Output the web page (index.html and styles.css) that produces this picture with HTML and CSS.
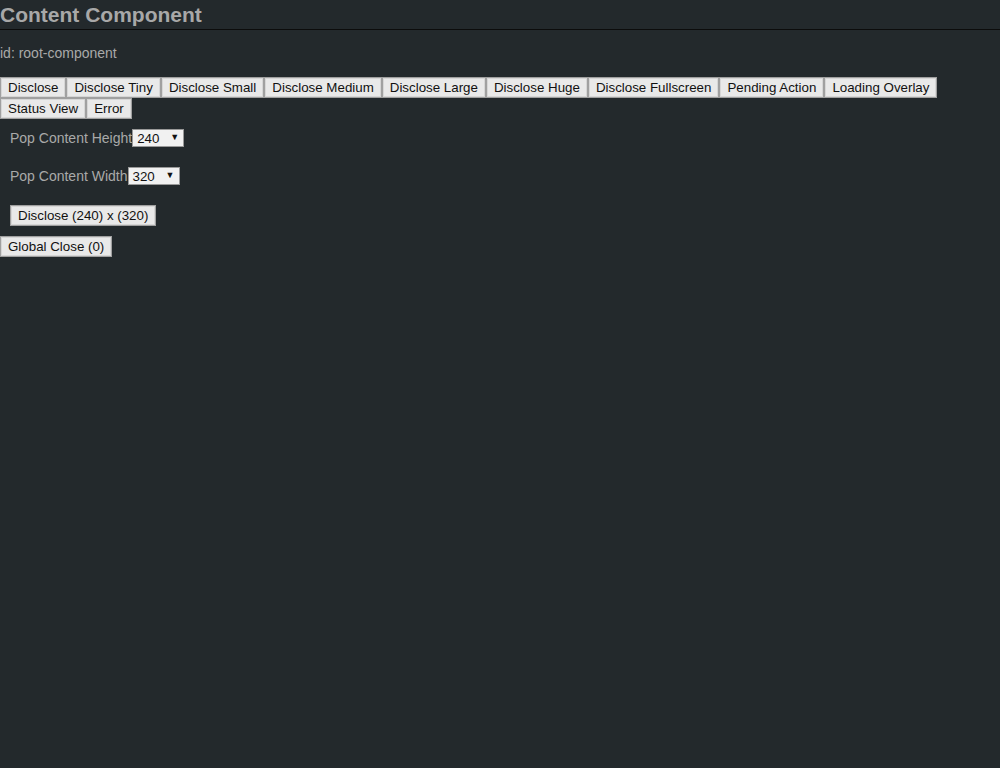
FILE: index.html
```html
<!DOCTYPE html>
<html>
<head>
<meta charset="utf-8">
<link rel="stylesheet" href="styles.css">
</head>
<body>
<h1 class="title">Content Component</h1>
<div class="id-line">id: root-component</div>
<div class="btn-row"><button class="btn">Disclose</button><button class="btn">Disclose Tiny</button><button class="btn">Disclose Small</button><button class="btn">Disclose Medium</button><button class="btn">Disclose Large</button><button class="btn">Disclose Huge</button><button class="btn">Disclose Fullscreen</button><button class="btn">Pending Action</button><button class="btn">Loading Overlay</button><button class="btn">Status View</button><button class="btn">Error</button></div>
<div class="pop">
  <div class="field"><span class="label">Pop Content Height</span><span class="sel"><span class="sel-val">240</span><span class="arrow">▼</span></span></div>
  <div class="field"><span class="label">Pop Content Width</span><span class="sel"><span class="sel-val">320</span><span class="arrow">▼</span></span></div>
  <div class="field"><button class="btn">Disclose (240) x (320)</button></div>
</div>
<div class="global"><button class="btn">Global Close (0)</button></div>
</body>
</html>
```
FILE: styles.css
```css
html, body {
  margin: 0;
  padding: 0;
  background: #23292c;
  color: #a9a9a9;
  font-family: "Liberation Sans", Arial, sans-serif;
}
.title {
  margin: 0;
  height: 29px;
  line-height: 30px;
  font-size: 21px;
  font-weight: bold;
  color: #a8a8a8;
  border-bottom: 1px solid #0c0c0c;
}
.id-line {
  font-size: 14px;
  line-height: 16px;
  margin-top: 15px;
  height: 16px;
  color: #a9a9a9;
}
.btn-row {
  margin-top: 16px;
  display: flex;
  flex-wrap: wrap;
}
.btn {
  font-family: "Liberation Sans", Arial, sans-serif;
  font-size: 13.3333px;
  color: #111;
  background: #e9e9e9;
  border: 1px solid #a0a0a0;
  box-shadow: inset 0 0 0 1px #d6d6d6;
  height: 21px;
  padding: 0 7px;
  margin: 0;
  line-height: 19px;
  border-radius: 0;
}
.pop {
  padding: 10px 10px 0 10px;
  display: flex;
  flex-direction: column;
  gap: 20px;
}
.field {
  display: flex;
  align-items: center;
  height: 18px;
}
.field .btn {
  margin-top: 2px;
}
.label {
  font-size: 14px;
  color: #a9a9a9;
}
.sel {
  position: relative;
  display: inline-flex;
  align-items: center;
  width: 50px;
  height: 16px;
  background: #f1f1f1;
  border: 1px solid #999;
  color: #111;
  font-size: 13.3333px;
}
.sel-val {
  padding-left: 4px;
}
.arrow {
  position: absolute;
  right: 4px;
  top: 2px;
  font-size: 9px;
  line-height: 10px;
  color: #111;
}
.global {
  margin-top: 13px;
}
```
